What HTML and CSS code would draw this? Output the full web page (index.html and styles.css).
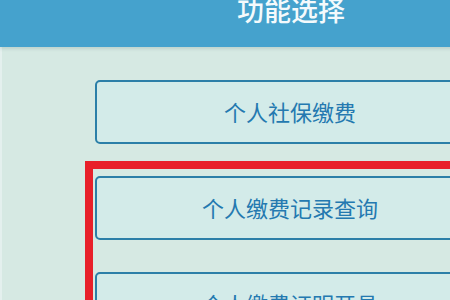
FILE: index.html
```html
<!DOCTYPE html>
<html lang="zh-CN">
<head>
<meta charset="utf-8">
<title>功能选择</title>
<link rel="stylesheet" href="styles.css">
</head>
<body>
<div class="page">
  <header class="topbar">
    <h1 class="title">功能选择</h1>
  </header>
  <main class="menu">
    <a class="menu-btn">个人社保缴费</a>
    <a class="menu-btn">个人缴费记录查询</a>
    <a class="menu-btn">个人缴费证明开具</a>
  </main>
  <div class="highlight"></div>
</div>
</body>
</html>
```

FILE: styles.css
```css
html, body {
  margin: 0;
  padding: 0;
  width: 450px;
  height: 300px;
  overflow: hidden;
  background: #d6e9e3;
}
.page {
  position: relative;
  width: 580px;
  height: 420px;
  background: #d6e9e3;
  font-family: "Noto Sans CJK SC", "Noto Sans", sans-serif;
  border-left: 2px solid #e4f0ee;
  box-sizing: border-box;
}
.topbar {
  height: 47px;
  background: #45a2cd;
  overflow: hidden;
  display: flex;
  justify-content: center;
  align-items: flex-start;
  box-shadow: 0 2px 3px rgba(120, 150, 140, 0.25);
  margin-left: -2px;
  padding-left: 2px;
}
.title {
  margin: -4px 0 0 0;
  font-size: 27px;
  line-height: 27px;
  font-weight: 500;
  color: #f4fafc;
}
.menu {
  display: flex;
  flex-direction: column;
  gap: 32px;
  padding: 33px 0 0 93px;
}
.menu-btn {
  display: flex;
  align-items: center;
  justify-content: center;
  width: 390px;
  height: 64px;
  box-sizing: border-box;
  border: 2px solid #2c7fa8;
  border-radius: 5px;
  background: #d3ebe9;
  color: #2479b0;
  font-size: 22px;
  line-height: 1;
  padding-bottom: 3px;
}
.highlight {
  position: absolute;
  left: 83px;
  top: 161px;
  width: 410px;
  height: 300px;
  border: 8px solid #e8202a;
  box-sizing: border-box;
}
```
